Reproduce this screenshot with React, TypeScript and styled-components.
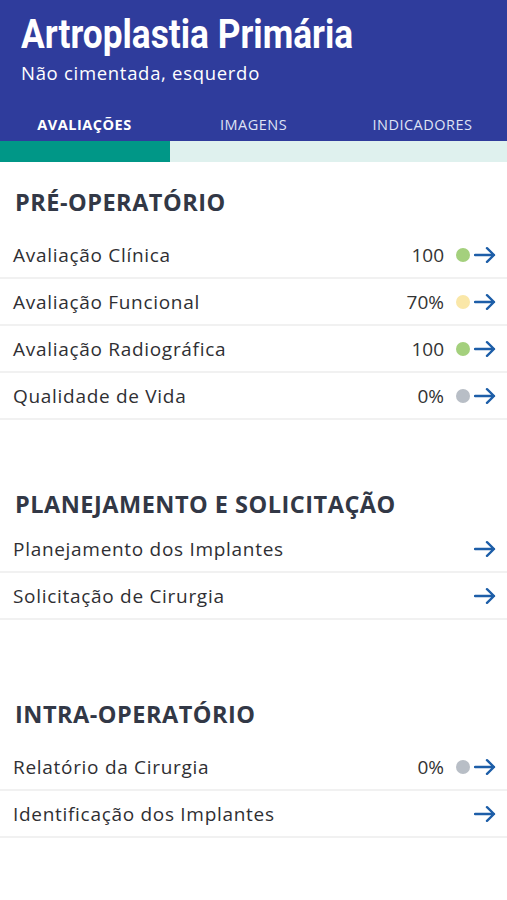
import React from 'react';
import styled, { createGlobalStyle } from 'styled-components';

type RowType = {
  label: string,
  value?: string,
  status?: 'done' | 'partial' | 'empty'
}

type SectionType = {
  title: string,
  rows: RowType[],
  gap: number,
  titleGap: number
}

const sections: SectionType[] = [
  {
    title: 'PRÉ-OPERATÓRIO',
    gap: 22,
    titleGap: 12,
    rows: [
      { label: 'Avaliação Clínica', value: '100', status: 'done' },
      { label: 'Avaliação Funcional', value: '70%', status: 'partial' },
      { label: 'Avaliação Radiográfica', value: '100', status: 'done' },
      { label: 'Qualidade de Vida', value: '0%', status: 'empty' },
    ]
  },
  {
    title: 'PLANEJAMENTO E SOLICITAÇÃO',
    gap: 66,
    titleGap: 4,
    rows: [
      { label: 'Planejamento dos Implantes' },
      { label: 'Solicitação de Cirurgia' },
    ]
  },
  {
    title: 'INTRA-OPERATÓRIO',
    gap: 76,
    titleGap: 12,
    rows: [
      { label: 'Relatório da Cirurgia', value: '0%', status: 'empty' },
      { label: 'Identificação dos Implantes' },
    ]
  }
];

const tabs = ['AVALIAÇÕES', 'IMAGENS', 'INDICADORES'];

const Arrow = () => (
  <svg width="22" height="18" viewBox="0 0 22 18" fill="none">
    <path d="M1 9 H20 M13 2.2 L20 9 L13 15.8" stroke="#1d5ea8" strokeWidth="2.4" strokeLinecap="round" strokeLinejoin="round" />
  </svg>
);

export default function App() {
  return (
    <>
      <GlobalStyle />
      <Page>
        <Header>
          <Title>Artroplastia Primária</Title>
          <Subtitle>Não cimentada, esquerdo</Subtitle>
          <Tabs>
            {tabs.map((t, i) => (
              <Tab key={t} active={i === 0}>{t}</Tab>
            ))}
          </Tabs>
        </Header>
        <Indicator>
          <IndicatorFill />
        </Indicator>
        {sections.map(s => (
          <Section key={s.title} gap={s.gap}>
            <SectionTitle titleGap={s.titleGap}>{s.title}</SectionTitle>
            {s.rows.map(r => (
              <Row key={r.label}>
                <Label>{r.label}</Label>
                <Right>
                  {r.value && <Value>{r.value}</Value>}
                  {r.status && <Dot status={r.status} />}
                  <Arrow />
                </Right>
              </Row>
            ))}
          </Section>
        ))}
      </Page>
    </>
  );
}

const GlobalStyle = createGlobalStyle`
  body {
    margin: 0;
    background: #fff;
    font-family: "Open Sans", "Noto Sans", sans-serif;
  }
`
const Page = styled.div`
  width: 507px;
  min-height: 900px;
  background: #fff;
`
const Header = styled.div`
  background-color: #2f3c9c;
  padding: 10px 0 0 0;
  color: #fff;
`
const Title = styled.h1`
  margin: 0;
  padding-left: 21px;
  font-family: "Roboto", sans-serif;
  font-weight: 700;
  font-size: 41px;
  line-height: 48px;
  transform: scaleX(0.86);
  transform-origin: 21px 50%;
  white-space: nowrap;
`
const Subtitle = styled.div`
  padding-left: 21px;
  font-size: 18.5px;
  line-height: 24px;
  letter-spacing: 0.7px;
  margin-top: 3px;
`
const Tabs = styled.div`
  display: grid;
  grid-template-columns: repeat(3, 1fr);
  margin-top: 23px;
  height: 33px;
  align-items: center;
`
const Tab = styled.div<{ active?: boolean }>`
  text-align: center;
  font-size: 14.5px;
  letter-spacing: 0.5px;
  font-weight: ${p => p.active ? 700 : 400};
  color: ${p => p.active ? '#ffffff' : '#dfe3f5'};
`
const Indicator = styled.div`
  height: 21px;
  background-color: #dff1ee;
  display: flex;
`
const IndicatorFill = styled.div`
  width: 170px;
  background-color: #009787;
`
const Section = styled.div<{ gap: number }>`
  padding-top: ${p => p.gap}px;
`
const SectionTitle = styled.h2<{ titleGap: number }>`
  margin: 0 0 ${p => p.titleGap}px 0;
  padding-left: 15px;
  font-size: 23.5px;
  font-weight: 700;
  line-height: 36px;
  letter-spacing: 0.5px;
  color: #323846;
`
const Row = styled.div`
  display: flex;
  align-items: center;
  justify-content: space-between;
  height: 45px;
  padding: 0 11px 0 13px;
  border-bottom: 2px solid #f1f1f1;
`
const Label = styled.span`
  font-size: 19px;
  letter-spacing: 0.7px;
  color: #2f2f33;
`
const Right = styled.div`
  display: flex;
  align-items: center;
`
const Value = styled.span`
  font-size: 19px;
  color: #333;
  margin-right: 12px;
`
const dotColors = {
  done: '#a4d07d',
  partial: '#fae7a8',
  empty: '#b8bec6'
}
const Dot = styled.span<{ status: 'done' | 'partial' | 'empty' }>`
  width: 14px;
  height: 14px;
  border-radius: 50%;
  background-color: ${p => dotColors[p.status]};
  margin-right: 4px;
`
